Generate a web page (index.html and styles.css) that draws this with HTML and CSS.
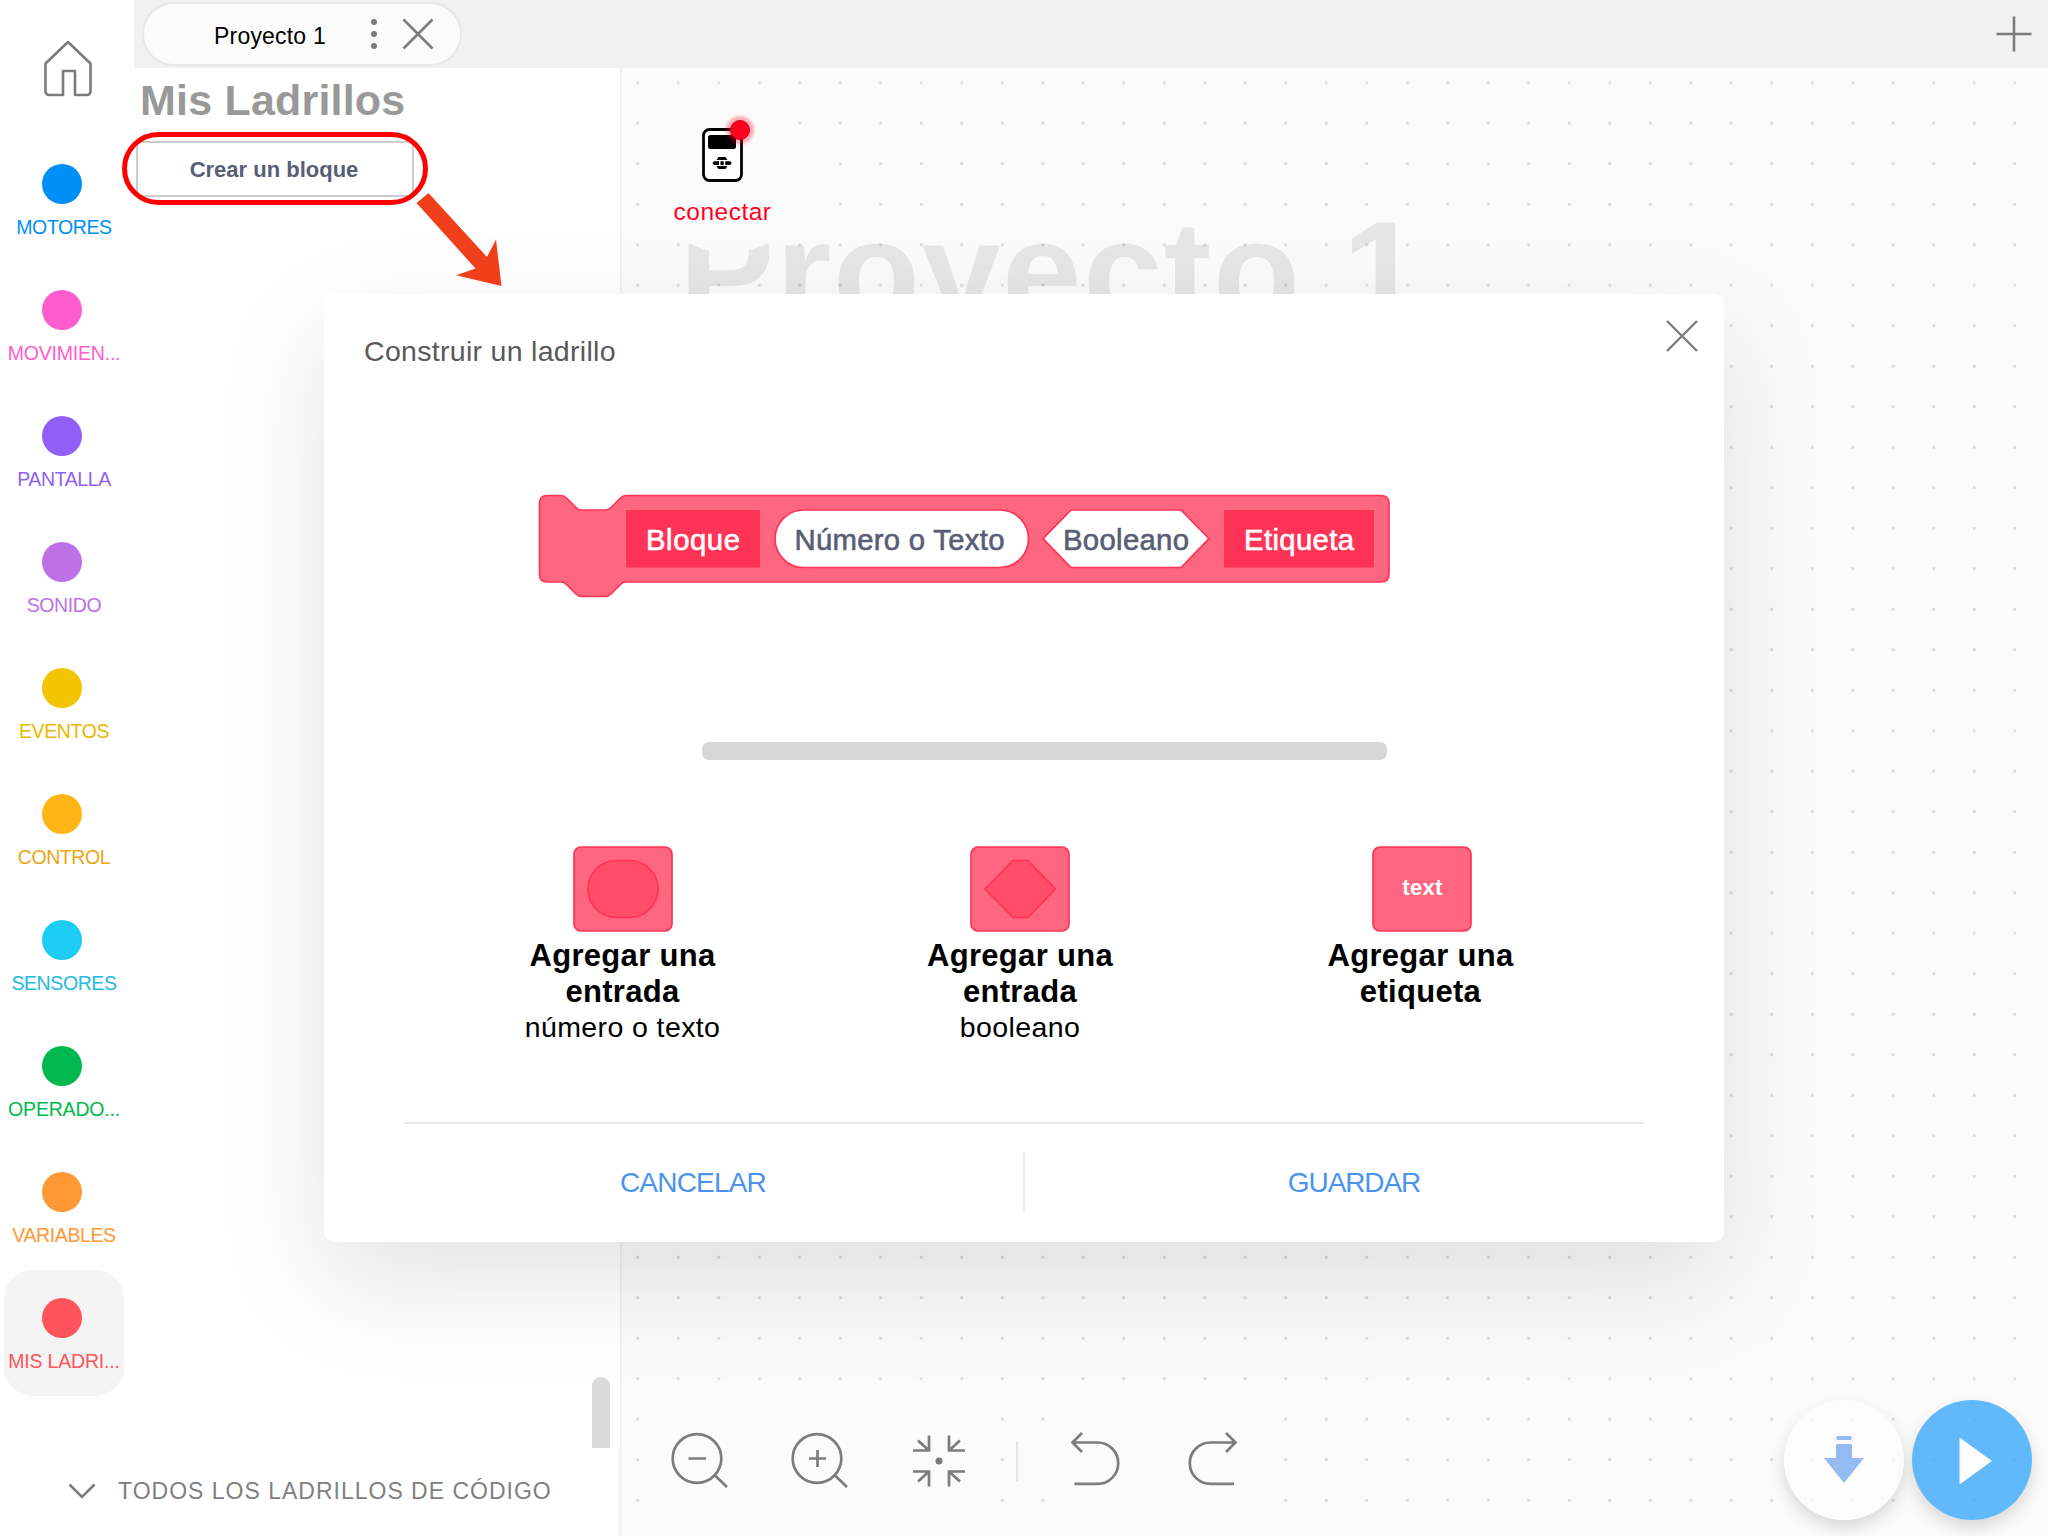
FILE: index.html
```html
<!DOCTYPE html>
<html lang="es">
<head>
<meta charset="utf-8">
<title>Proyecto 1</title>
<link rel="stylesheet" href="styles.css">
</head>
<body>
<div class="app">
  <nav class="sidebar">
    <div class="home">
      <svg width="52" height="60" viewBox="0 0 52 60"><path d="M26 3 48.5 24.500V52q0 4-4 4H33V32H21V56H7.500q-4 0-4-4V24.500z" fill="none" stroke="#7c7c7c" stroke-width="2.600" stroke-linejoin="round"/></svg>
    </div>
    <a class="cat motores"><i class="dot"></i><span>MOTORES</span></a>
    <a class="cat movimiento"><i class="dot"></i><span>MOVIMIEN...</span></a>
    <a class="cat pantalla"><i class="dot"></i><span>PANTALLA</span></a>
    <a class="cat sonido"><i class="dot"></i><span>SONIDO</span></a>
    <a class="cat eventos"><i class="dot"></i><span>EVENTOS</span></a>
    <a class="cat control"><i class="dot"></i><span>CONTROL</span></a>
    <a class="cat sensores"><i class="dot"></i><span>SENSORES</span></a>
    <a class="cat operadores"><i class="dot"></i><span>OPERADO...</span></a>
    <a class="cat variables"><i class="dot"></i><span>VARIABLES</span></a>
    <a class="cat ladrillos selected"><i class="dot"></i><span>MIS LADRI...</span></a>
  </nav>

  <header class="topbar">
    <div class="tab">
      <span class="tab-name">Proyecto 1</span>
      <svg class="tab-menu" width="8" height="32" viewBox="0 0 8 32"><g fill="#7c7c7c"><circle cx="4" cy="4" r="3"/><circle cx="4" cy="16" r="3"/><circle cx="4" cy="28" r="3"/></g></svg>
      <svg class="tab-close" width="32" height="32" viewBox="0 0 32 32"><path d="M1.500 1.500 30.500 30.500M30.500 1.500 1.500 30.500" stroke="#7c7c7c" stroke-width="2.600"/></svg>
    </div>
    <svg class="add" width="36" height="36" viewBox="0 0 36 36"><path d="M.5 18h35M18 .5v35" stroke="#7c7c7c" stroke-width="2.600"/></svg>
  </header>

  <section class="panel">
    <h1>Mis Ladrillos</h1>
    <button class="create">Crear un bloque</button>
    <div class="scroll-thumb"></div>
  </section>

  <main class="canvas">
    <div class="watermark">Proyecto 1</div>
    <div class="connect">
      <svg width="48" height="66" viewBox="0 0 48 66">
        <rect x="3.500" y="12.500" width="38" height="51" rx="6" fill="#fff" stroke="#000" stroke-width="2.800"/>
        <rect x="8" y="18" width="28" height="14" rx="2.500"/>
        <path d="M18.500 40h7l2 3h-11zM18.500 52h7l2-3h-11z"/>
        <path d="M14 44.300h5v3.600h-5l-1.500-1.800zM20.500 44.300h3.200v3.600h-3.200zM25.200 44.300h5l1.500 1.800-1.500 1.800h-5z"/>
      </svg>
      <i class="status"></i>
      <span>conectar</span>
    </div>
    <div class="tools">
      <div class="tool-group">
        <svg width="120" height="120" viewBox="0 0 120 120"><circle cx="58" cy="57.500" r="24.300"/><path d="M76 74.500 88 86M49.500 57.500h17.500"/></svg>
        <svg width="120" height="120" viewBox="0 0 120 120"><circle cx="58" cy="57.500" r="24.300"/><path d="M76 74.500 88 86M50 57.500h17M58.500 49v17"/></svg>
        <svg width="120" height="120" viewBox="0 0 120 120"><path d="M34 49.500H50V34.500M39 39.500 50 49.500M86 49.500H70V34.500M81 39.500 70 49.500M34 70.500H50V85.500M39 80.500 50 70.500M86 70.500H70V85.500M81 80.500 70 70.500"/><circle class="solid" cx="60" cy="60" r="3.500"/></svg>
      </div>
      <i class="tool-divider"></i>
      <div class="tool-group">
        <svg width="120" height="120" viewBox="0 0 120 120"><path d="M47 32 37.500 41.500 47 51M37.500 41.500H62.500a20.700 20.700 0 0 1 0 41.400H39.500"/></svg>
        <svg width="120" height="120" viewBox="0 0 120 120"><path d="M71 32 80.500 41.500 71 51M80.500 41.500H55.500a20.700 20.700 0 0 0 0 41.400H79"/></svg>
      </div>
    </div>
    <div class="actions">
      <div class="fab download"><svg width="120" height="120" viewBox="0 0 120 120"><path fill="#94bcf3" d="M54 36h12a2 2 0 0 1 0 4H54a2 2 0 0 1 0-4zM53.500 44h13q1.500 0 1.500 1.500V58H80L60 83 40 58H52V45.500q0-1.500 1.500-1.500z"/></svg></div>
      <div class="fab play"><svg width="120" height="120" viewBox="0 0 120 120"><path fill="#fdfdfd" d="M47.500 37.500 80 61 47.500 84.500z"/></svg></div>
    </div>
  </main>

  <footer class="panel-footer">
    <svg width="28" height="16" viewBox="0 0 28 16"><path d="M1.500 1.500 14 14 26.500 1.500" fill="none" stroke="#7c7c7c" stroke-width="2.600"/></svg>
    <span>TODOS LOS LADRILLOS DE CÓDIGO</span>
  </footer>

  <div class="modal">
    <div class="modal-head">
      <h2>Construir un ladrillo</h2>
      <svg width="32" height="32" viewBox="0 0 32 32"><path d="M1 1 31 31M31 1 1 31" stroke="#7c7c7c" stroke-width="2.400"/></svg>
    </div>
    <svg class="block" width="854" height="106" viewBox="537 493 854 106">
      <path d="M547 495.500H561q3 0 5.500 2.500L576 507.500q2.500 2.500 6 2.500H605q3.500 0 6-2.500L620.500 498q2-2.500 5.500-2.500H1381q8 0 8 8V574q0 8-8 8H626q-3.500 0-5.500 2.500L611 594q-2.500 2.500-6 2.500H582q-3.500 0-6-2.500L566.500 584.500q-2.500-2.500-5.500-2.500H547q-7.500 0-7.500-8V503.500q0-8 7.500-8z" fill="#ff6680" stroke="#ff3355" stroke-width="1.700"/>
      <rect x="626" y="510" width="134" height="57.500" fill="#ff3355"/>
      <rect x="775" y="510" width="253.500" height="57.500" rx="28.750" fill="#fff" stroke="#ff3355" stroke-width="1.700"/>
      <path d="M1071 510H1181L1209 538.700 1181 567.500H1071L1043 538.700z" fill="#fff" stroke="#ff3355" stroke-width="1.700"/>
      <rect x="1224" y="510" width="150" height="57.500" fill="#ff3355"/>
      <g class="block-text">
        <text class="light" x="693" y="550" textLength="94">Bloque</text>
        <text class="dark" x="899.500" y="550" textLength="210">Número o Texto</text>
        <text class="dark" x="1126" y="550" textLength="126">Booleano</text>
        <text class="light" x="1299" y="550" textLength="110">Etiqueta</text>
      </g>
    </svg>
    <div class="modal-scroll"></div>
    <div class="options">
      <div class="option">
        <svg width="100" height="86" viewBox="0 0 100 86"><rect class="tile" x="1" y="1" width="98" height="84" rx="7"/><rect class="shape" x="15" y="14.500" width="70" height="57" rx="28.500"/></svg>
        <b>Agregar una<br>entrada</b><span>número o texto</span>
      </div>
      <div class="option">
        <svg width="100" height="86" viewBox="0 0 100 86"><rect class="tile" x="1" y="1" width="98" height="84" rx="7"/><path class="shape" d="M43 14.500H58L85.500 43 58 71.500H43L15 43z"/></svg>
        <b>Agregar una<br>entrada</b><span>booleano</span>
      </div>
      <div class="option">
        <svg width="100" height="86" viewBox="0 0 100 86"><rect class="tile" x="1" y="1" width="98" height="84" rx="7"/><text class="tile-text" x="50.500" y="49">text</text></svg>
        <b>Agregar una<br>etiqueta</b>
      </div>
    </div>
    <div class="modal-actions">
      <a class="cancel">CANCELAR</a>
      <i></i>
      <a class="save">GUARDAR</a>
    </div>
  </div>

  <div class="highlight"></div>
  <svg class="pointer" width="90" height="96" viewBox="414 191 90 96"><path d="M428.500 193 487 257 496 239.500 501.500 286 456 275.300 475.500 268.500 416.500 203z" fill="#f13f1c"/></svg>
</div>
</body>
</html>
```
FILE: styles.css
```css
* { box-sizing: border-box; }

body {
  margin: 0;
  font-family: "Liberation Sans", Arial, sans-serif;
  background: #fff;
}

h1, h2 { margin: 0; }
svg { display: block; flex: none; }

.app {
  position: relative;
  width: 2048px;
  height: 1536px;
  overflow: hidden;
  display: grid;
  grid-template-columns: 134px 488px 1426px;
  grid-template-rows: 68px 1380px 88px;
}

/* Category sidebar */
.sidebar {
  grid-area: 1 / 1 / 3 / 2;
  display: flex;
  flex-direction: column;
  padding-left: 4px;
}
.home { height: 136px; padding: 39px 0 0 38px; }
.cat {
  width: 120px;
  height: 126px;
  padding-top: 28px;
  display: flex;
  flex-direction: column;
  align-items: center;
  font-size: 19.500px;
  line-height: 24px;
  letter-spacing: -0.400px;
  white-space: nowrap;
}
.cat.selected { background: #f4f4f4; border-radius: 29px; }
.dot {
  width: 40px;
  height: 40px;
  margin: 0 4px 11px 0;
  border-radius: 50%;
  background: currentColor;
}
.motores { color: #0090f5; }
.movimiento { color: #ff5ccd; }
.pantalla { color: #915ff5; }
.sonido { color: #be70e6; }
.eventos { color: #f5c400; }
.eventos span { color: #e6b800; }
.control { color: #ffb515; }
.control span { color: #eba613; }
.sensores { color: #1dccf2; }
.sensores span { color: #1fbade; }
.operadores { color: #00b84d; }
.variables { color: #ff9933; }
.ladrillos { color: #ff545c; }
.movimiento span, .operadores span, .ladrillos span { letter-spacing: -0.200px; }

/* Top bar with project tab */
.topbar {
  grid-area: 1 / 2 / 2 / 4;
  background: #f1f1f1;
  display: flex;
  justify-content: space-between;
  padding: 2px 16px 0 8px;
}
.tab {
  width: 320px;
  height: 64px;
  border: 2px solid #e8e8e8;
  border-radius: 32px;
  background: #fbfbfb;
  display: flex;
  align-items: center;
  padding-left: 70px;
}
.tab-name { font-size: 23px; letter-spacing: 0.2px; width: 156px; padding-top: 4px; }
.tab-menu { margin-right: 25px; }
.tab-close { margin-left: -1px; }
.add { margin-top: 13.500px; }

/* Block palette */
.panel {
  grid-area: 2 / 2 / 3 / 3;
  border-right: 2px solid #f1f1f1;
  display: flex;
  flex-direction: column;
  background: #fff;
}
h1 {
  font-size: 43px;
  line-height: 50px;
  letter-spacing: 0.200px;
  color: #999;
  padding: 7px 0 0 6px;
}
.create {
  width: 278px;
  height: 56px;
  margin: 16px 0 0 2px;
  padding: 1px 2px 0 0;
  border: 2px solid #ccc;
  background: #fff;
  color: #575e75;
  font: bold 22px "Liberation Sans", Arial, sans-serif;
}
.scroll-thumb {
  width: 18px;
  height: 71px;
  margin: auto 10px 0 auto;
  border-radius: 9px 9px 0 0;
  background: #d9d9d9;
}
.panel-footer {
  grid-area: 3 / 1 / 4 / 3;
  border-right: 4px solid #f4f4f4;
  background: #fff;
  display: flex;
  align-items: center;
  padding: 0 0 2px 68px;
  gap: 22px;
  font-size: 23px;
  letter-spacing: 1px;
  color: #808080;
}

/* Programming canvas with dot grid */
.canvas {
  grid-area: 2 / 3 / 4 / 4;
  position: relative;
  background: radial-gradient(circle, #dadada 1.2px, #dadada00 2px) -4.500px -5.500px / 40.500px 40.500px #fbfbfb;
}
.watermark {
  position: absolute;
  left: 57px;
  top: 124px;
  font-size: 143px;
  line-height: 160px;
  letter-spacing: 1.300px;
  font-weight: bold;
  color: rgba(0, 0, 0, 0.082);
  white-space: nowrap;
}
.connect {
  position: absolute;
  left: 22px;
  top: 17px;
  width: 168px;
  height: 168px;
  border-radius: 50%;
  background: #fbfbfb;
  padding: 32px 11px 0 0;
  display: flex;
  flex-direction: column;
  align-items: center;
  color: #ff0020;
  font-size: 24.500px;
  line-height: 28px;
  letter-spacing: 0.5px;
}
.connect svg { margin-left: 2px; }
.connect span { margin-top: 15px; }
.status {
  position: absolute;
  left: 86px;
  top: 35px;
  width: 20px;
  height: 20px;
  border-radius: 50%;
  background: #ff0020;
  border: 1px solid #d0001c;
  box-shadow: 0 0 3px 4px rgba(255, 0, 32, 0.32);
}
.tools {
  position: absolute;
  left: 17px;
  bottom: 15.500px;
  display: flex;
  align-items: center;
}
.tool-group { display: flex; border-radius: 60px; background: #fbfbfb; }
.tool-group svg { fill: none; stroke: #7c7c7c; stroke-width: 2.700; }
.tool-group .solid { fill: #7c7c7c; stroke: none; }
.tool-divider { width: 2px; height: 40px; margin: 0 17px 0 17px; background: #e6e6e6; }
.actions {
  position: absolute;
  right: 16px;
  bottom: 16px;
  display: flex;
  gap: 8px;
}
.fab { width: 120px; height: 120px; border-radius: 50%; box-shadow: 0 8px 16px rgba(0, 0, 0, 0.14); }
.download { background: rgba(252, 252, 252, 0.75); }
.play { background: rgba(71, 173, 248, 0.85); }

/* Block builder dialog */
.modal {
  position: absolute;
  left: 324px;
  top: 294px;
  width: 1400px;
  height: 948px;
  border-radius: 10px;
  background: #fff;
  box-shadow: 0 40px 110px rgba(0, 0, 0, 0.115);
}
.modal-head {
  height: 199px;
  display: flex;
  justify-content: space-between;
  padding: 26px 26px 0 40px;
}
h2 {
  font-size: 28.500px;
  font-weight: normal;
  letter-spacing: 0.300px;
  line-height: 32px;
  margin-top: 15px;
  color: #595959;
}
.block { margin-left: 213px; }
.block-text { font-size: 29.300px; text-anchor: middle; stroke-width: 0.600px; }
.light { fill: #fff; stroke: #fff; }
.dark { fill: #575e75; stroke: #575e75; }
.modal-scroll {
  width: 685px;
  height: 18px;
  margin: 143px 0 86px 378px;
  border-radius: 7px;
  background: #d7d7d7;
}
.options {
  display: grid;
  grid-template-columns: 397px 398px 405px;
  height: 276px;
  padding-left: 100px;
}
.option {
  display: flex;
  flex-direction: column;
  align-items: center;
  text-align: center;
  font-size: 28.500px;
  line-height: 36px;
  letter-spacing: 0.4px;
}
.option b { margin-top: 6px; font-size: 31px; letter-spacing: 0.3px; }
.option span { margin-top: -1px; }
.option:last-child b { margin-left: -2px; }
.tile { fill: #ff6680; stroke: #ff3355; stroke-width: 1.700; }
.shape { fill: #ff4d6a; stroke: #ff3355; stroke-width: 1.700; }
.tile-text { fill: #fff; font-size: 22px; font-weight: bold; text-anchor: middle; letter-spacing: 0.3px; }
.modal-actions {
  width: 1240px;
  margin-left: 80px;
  border-top: 2px solid #e8e8e8;
  padding-top: 28px;
  display: flex;
  align-items: center;
  color: #4a93ee;
  font-size: 28px;
  letter-spacing: -0.8px;
  text-align: center;
}
.modal-actions i { width: 2px; height: 60px; background: #e6e6e6; }
.modal-actions a { padding-top: 2px; }
.cancel { width: 619px; padding-right: 41px; }
.save { width: 619px; padding-left: 39px; letter-spacing: -1.100px; }

/* Tutorial callout over the create button */
.highlight {
  position: absolute;
  left: 122px;
  top: 132px;
  width: 306px;
  height: 73px;
  border: 5px solid #ff0000;
  border-radius: 37px;
}
.pointer { position: absolute; left: 414px; top: 191px; }
```
